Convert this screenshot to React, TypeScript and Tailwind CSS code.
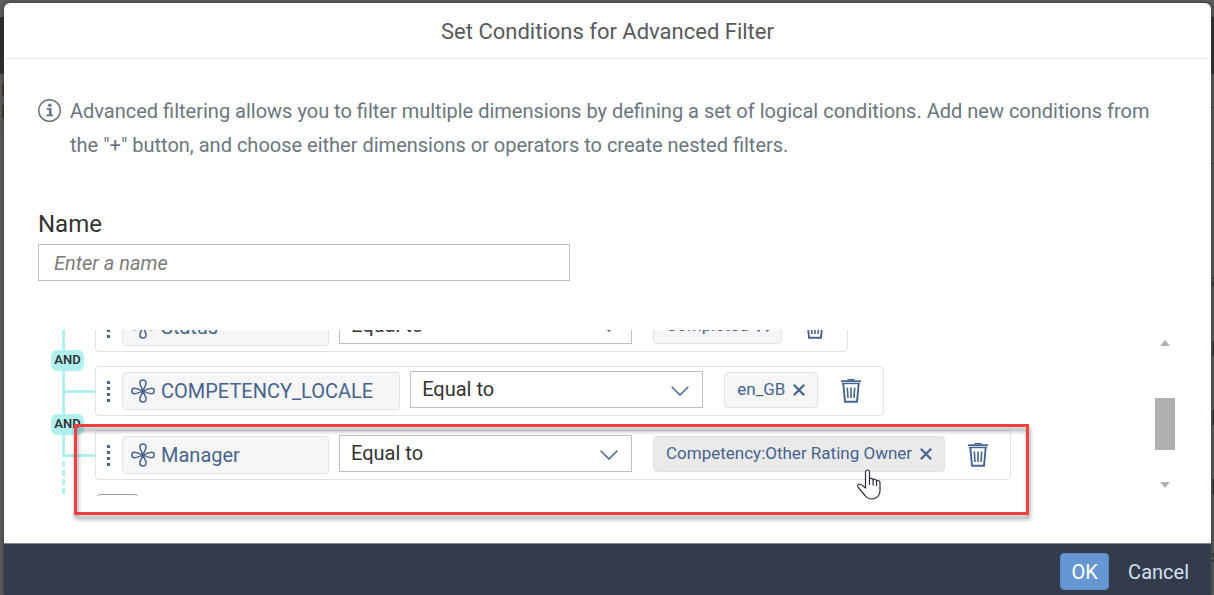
import React, { useState } from 'react';

interface Condition {
  id: number;
  dimension: string;
  value: string;
  active?: boolean;
}

const initialConditions: Condition[] = [
  { id: 1, dimension: 'Status', value: 'Completed' },
  { id: 2, dimension: 'COMPETENCY_LOCALE', value: 'en_GB' },
  { id: 3, dimension: 'Manager', value: 'Competency:Other Rating Owner', active: true },
];

const InfoIcon: React.FC = () => (
  <svg viewBox="0 0 24 24" className="w-6 h-6 shrink-0" fill="none" stroke="#6a767d">
    <circle cx="11.5" cy="11.5" r="10.8" strokeWidth="1.5" />
    <path d="M8.700 9.800h3.200v6.400M8.300 16.300h6.600" strokeWidth="1.700" />
    <path d="M12.200 9v7.500" strokeWidth="2.600" />
    <circle cx="11.800" cy="6.200" r="1.700" fill="#6a767d" stroke="none" />
  </svg>
);

const DimensionIcon: React.FC = () => (
  <svg viewBox="0 0 24 24" className="w-6 h-6 shrink-0" fill="none" stroke="#45648f" strokeWidth="1.5" strokeLinejoin="round">
    <path d="M12 12C11 9 8.900 6.500 8.900 4a3.100 3.100 0 0 1 6.200 0c0 2.500-2.100 5-3.100 8Z" />
    <path d="M12 12c-1 3-3.100 5.500-3.100 8a3.100 3.100 0 0 0 6.200 0c0-2.500-2.100-5-3.100-8Z" />
    <path d="M12 12C9 11 6.500 9.300 3.500 9.300a2.700 2.700 0 0 0 0 5.400c3 0 5.500-1.700 8.500-2.700Z" />
    <path d="M12 12c3-1 5.500-2.700 8.500-2.700a2.700 2.700 0 0 1 0 5.400c-3 0-5.500-1.700-8.500-2.700Z" />
  </svg>
);

const TrashIcon: React.FC = () => (
  <svg viewBox="0 0 20 24" className="w-5 h-6" fill="none" stroke="#45648f">
    <path d="M0 2.200h20" strokeWidth="1.800" />
    <path d="M6.500 1.500C6.500.8 7 .7 7.500.7h5c.5 0 1 .1 1 .8" strokeWidth="1.400" />
    <path d="M1 4.500h18" strokeWidth="1.400" />
    <path d="M2.300 4.500 4 22.800h12L17.700 4.500" strokeWidth="1.900" />
    <path d="M6.300 8.500l.7 10.500M10 8.500V19M13.700 8.500 13 19" strokeWidth="1.600" />
  </svg>
);

const HandCursor: React.FC = () => (
  <svg viewBox="0 0 24 31" className="w-6 h-[31px]" fill="#fff" stroke="#2b2b3d" strokeWidth="1.200" strokeLinejoin="round">
    <path d="M8.500 18V3a2 2 0 0 1 4 0v7.200c.8-1.200 3-1 3.600.6.900-1 2.900-.7 3.400.9 1.500-.7 3.500 0 3.500 2V22c0 4.500-3.500 8-8 8-3.200 0-5.300-1.200-7-3.500L.9 17.800c-.9-1.500.6-3.300 2.400-2.500 1.800.7 3.500 2 5.200 3.700Z" />
    <path d="M12.500 10v6M16.100 11v5.500M19.500 12v5" fill="none" />
  </svg>
);

const Connector: React.FC<{ last: boolean }> = ({ last }) => (
  <div className="relative flex flex-col w-[33px] shrink-0">
    <div className="h-[27px] border-l-3 border-b-3 border-[#b0f0f0]" />
    {last ? (
      <div className="flex-1 mt-1 border-l-3 border-dashed border-[#b0f0f0]" />
    ) : (
      <>
        <div className="flex-1 border-l-3 border-[#b0f0f0]" />
        <span className="absolute top-12 -left-[11px] w-[33px] h-[21px] rounded-md bg-[#b0f0f0] text-center text-[13px] leading-5 font-semibold text-[#333]">
          AND
        </span>
      </>
    )}
  </div>
);

const ConditionRow: React.FC<{ condition: Condition; last: boolean; onRemove: () => void }> = ({ condition, last, onRemove }) => (
  <li className="flex">
    <Connector last={last} />
    <div className="flex items-center h-[50px] mb-[14px] pl-[11px] pr-[22px] border border-[#e2e2e2] rounded-sm">
      <span className="flex flex-col gap-[3px] w-[15px]">
        <i className="w-[3px] h-[3px] bg-[#45648f]" />
        <i className="w-[3px] h-[3px] bg-[#45648f]" />
        <i className="w-[3px] h-[3px] bg-[#45648f]" />
        <i className="w-[3px] h-[3px] bg-[#45648f]" />
      </span>
      <button className="flex items-center gap-[6px] h-[38px] min-w-[207px] pl-2 pr-[26px] bg-[#f6f6f6] border border-[#e2e2e2] rounded-sm text-xl text-[#45648f]">
        <DimensionIcon />
        {condition.dimension}
      </button>
      <div className="relative ml-[10px] mr-[21px] mb-1">
        <select
          aria-label={`Operator for ${condition.dimension}`}
          className="block appearance-none w-[293px] h-[37px] pl-[11px] bg-white border border-[#bfbfbf] text-xl leading-6 text-[#333]"
        >
          <option>Equal to</option>
        </select>
        <svg viewBox="0 0 18 10" className="absolute right-[14px] top-[15px] w-[18px] h-[10px] pointer-events-none" fill="none" stroke="#45648f" strokeWidth="1.500">
          <path d="M.7.700 9 9 17.300.7" />
        </svg>
      </div>
      <button
        className={`flex items-center gap-2 h-9 px-3 mb-[2px] border border-[#e2e2e2] rounded-sm text-[17px] text-[#45648f] ${condition.active ? 'bg-[#eaeaea]' : 'bg-[#f6f6f6]'}`}
      >
        {condition.value}
        <svg viewBox="0 0 12 12" className="w-3 h-3" stroke="#45648f" strokeWidth="2.200">
          <path d="M.8.800 11.200 11.200M11.200.8.800 11.200" />
        </svg>
      </button>
      <button aria-label={`Delete ${condition.dimension}`} onClick={onRemove} className="ml-[23px]">
        <TrashIcon />
      </button>
    </div>
  </li>
);

const Backdrop: React.FC = () => (
  <div aria-hidden="true">
    <div className="h-[17px]" />
    <div className="h-[57px] bg-[#2b2d2f]" />
    <div className="flex justify-between">
      <div className="w-1 pt-[9px] flex flex-col items-end">
        <div className="w-[2px] h-[13px] bg-[#40301c]" />
        <div className="w-[2px] h-[13px] mt-[9px] bg-[#40301c]" />
        <div className="w-full h-[5px] mt-2 bg-[#53595e]" />
      </div>
      <div className="w-[3px] overflow-hidden text-xl text-[#22303a]">
        <div className="h-[34px] border-b border-[#3c3c3c]" />
        <div className="h-14 border-b border-[#3c3c3c]" />
        <ul className="mt-[82px]">
          {['a', 'b', 'b', 'b', 's'].map((label, i) => (
            <li key={i} className="h-[69px] leading-[69px]">{label}</li>
          ))}
        </ul>
      </div>
    </div>
  </div>
);

const App: React.FC = () => {
  const [name, setName] = useState('');
  const [conditions, setConditions] = useState(initialConditions);

  return (
    <div className="relative h-screen overflow-hidden bg-[#5c5c5c] font-[Roboto,sans-serif]">
      <Backdrop />

      <div role="dialog" aria-labelledby="dialog-title" className="absolute top-[3px] bottom-0 left-1 right-[3px] flex flex-col bg-white rounded-t-md shadow-[0_0_4px_#333]">
        <header className="h-14 pt-px border-b border-[#ebebeb] flex items-center justify-center">
          <h1 id="dialog-title" className="text-[22px] text-[#58595b]">Set Conditions for Advanced Filter</h1>
        </header>

        <main className="flex-1 pl-[34px] pr-9 pt-[35px]">
          <div className="flex gap-2">
            <span className="pt-[5px]">
              <InfoIcon />
            </span>
            <p className="text-xl leading-[34px] text-[#6a767d]">
              Advanced filtering allows you to filter multiple dimensions by defining a set of logical conditions. Add new conditions from the "+" button, and choose either dimensions or operators to create nested filters.
            </p>
          </div>

          <div className="mt-[46px] flex flex-col">
            <label htmlFor="filter-name" className="text-2xl leading-8 text-[#333]">Name</label>
            <input
              id="filter-name"
              value={name}
              onChange={e => setName(e.target.value)}
              placeholder="Enter a name"
              className="mt-1 w-[532px] h-[37px] px-[15px] border border-[#bfbfbf] text-xl placeholder:italic placeholder:text-[#7b7b7b]"
            />
          </div>

          <div className="relative mt-[49px] flex justify-between">
            <div className="flex-1 h-[166px] overflow-hidden">
              <ul className="ml-6 -mt-7">
                {conditions.map((condition, i) => (
                  <ConditionRow
                    key={condition.id}
                    condition={condition}
                    last={i === conditions.length - 1}
                    onRemove={() => setConditions(conditions.filter(c => c.id !== condition.id))}
                  />
                ))}
              </ul>
              <button aria-label="Add condition" className="block ml-[57px] w-[45px] h-9 border border-[#999] rounded-md" />
            </div>

            <div className="flex flex-col items-center justify-between w-5 h-[166px] pt-[10px] pb-2">
              <svg viewBox="0 0 10 6" className="w-[10px] h-[6px]" fill="#b0b0b0"><path d="M0 6 5 0l5 6Z" /></svg>
              <div className="w-5 h-[52px] mt-5 bg-[#b0b0b0]" />
              <svg viewBox="0 0 10 6" className="w-[10px] h-[6px]" fill="#b0b0b0"><path d="M0 0l5 6 5-6Z" /></svg>
            </div>

            {/* highlight around the newly added condition */}
            <div className="absolute left-9 top-[94px] w-[955px] h-[91px] border-3 border-[#f04040] drop-shadow-[1px_4px_2px_rgba(0,0,0,0.4)] pointer-events-none" />
            <span className="absolute left-[819px] top-[139px] pointer-events-none">
              <HandCursor />
            </span>
          </div>
        </main>

        <footer className="flex items-center justify-end gap-[7px] h-[52px] pt-1 pr-[10px] bg-[#343c4b] border-t border-[#7a8797]">
          <button className="w-[49px] h-[37px] rounded-sm border border-[#5a8ac8] bg-[#6797d3] text-xl text-white">OK</button>
          <button className="px-3 h-[37px] text-xl text-[#cfe0f5]">Cancel</button>
        </footer>
      </div>
    </div>
  );
};

export default App;
